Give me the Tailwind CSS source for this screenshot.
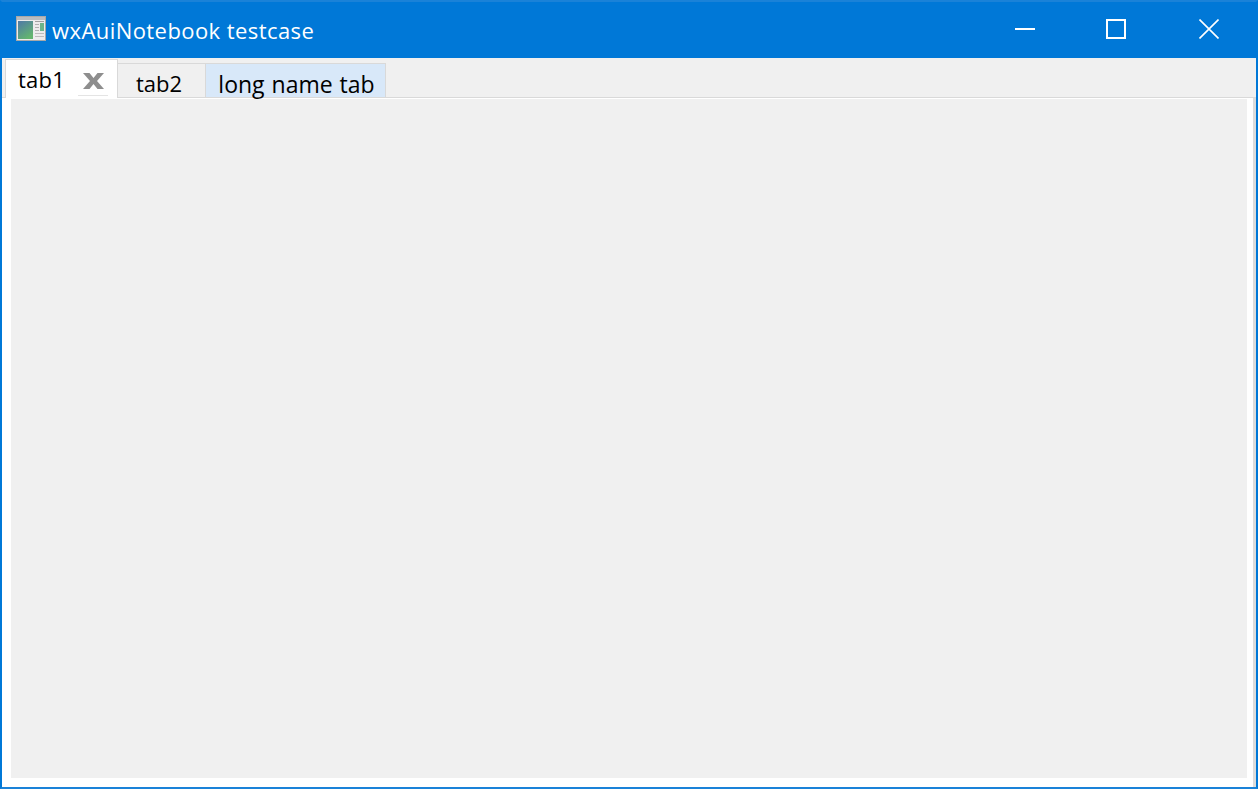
<!DOCTYPE html>
<html lang="en">
  <head>
    <meta charset="UTF-8" />
    <script src="https://cdn.jsdelivr.net/npm/@tailwindcss/browser@4"></script>
    <title>wxAuiNotebook testcase</title>
  </head>
  <body class="w-[1258px] h-[789px] overflow-hidden font-['Open_Sans',sans-serif]">
    <!-- window -->
    <div class="flex flex-col h-full border-x-2 border-b-2 border-t-2 border-x-[#0078d7] border-b-[#1a82d8] border-t-[#1a82d8] bg-[#f0f0f0]">
      <!-- title bar -->
      <header class="flex items-center h-14 shrink-0 bg-[#0078d7] text-white">
        <svg class="ml-[14px] mb-[3px] w-[30px] h-[25px]" viewBox="0 0 30 25">
          <rect x="0.5" y="0.5" width="29" height="24" fill="#ececec" stroke="#a8a8a8" />
          <rect x="1" y="1" width="28" height="3" fill="#b9bcc0" />
          <defs>
            <linearGradient id="pane" x1="0" y1="0" x2="0.6" y2="1">
              <stop offset="0" stop-color="#4f78a8" />
              <stop offset="1" stop-color="#63b56f" />
            </linearGradient>
          </defs>
          <rect x="2" y="5" width="15" height="18" fill="url(#pane)" />
          <rect x="19" y="5" width="9" height="1" fill="#a0a0a0" />
          <rect x="24" y="7" width="4" height="8" fill="#6db58a" />
          <rect x="19" y="8" width="4" height="1" fill="#b0b0b0" />
          <rect x="19" y="11" width="4" height="1" fill="#b0b0b0" />
          <rect x="19" y="14" width="4" height="1" fill="#b0b0b0" />
          <rect x="19" y="17" width="9" height="1" fill="#bcbcbc" />
          <rect x="19" y="20" width="9" height="1" fill="#bcbcbc" />
        </svg>
        <span class="ml-[6px] text-[22px] tracking-[0.43px] leading-none">wxAuiNotebook testcase</span>
        <div class="ml-auto mb-[2px] flex items-center">
          <svg class="w-5 h-5 mr-[71px]" viewBox="0 0 20 20"><path d="M0 9h20v2H0z" fill="#fff" /></svg>
          <svg class="w-5 h-5 mr-[73px]" viewBox="0 0 20 20"><path d="M1 1h18v18H1z" fill="none" stroke="#fff" stroke-width="2" /></svg>
          <svg class="w-5 h-5 mr-[37px]" viewBox="0 0 20 20"><path d="M0.5 0.5l19 19M19.500 0.500l-19 19" fill="none" stroke="#fff" stroke-width="1.6" /></svg>
        </div>
      </header>

      <!-- tab strip -->
      <nav class="relative flex items-end h-10 shrink-0 pl-[3px] border-b border-[#d9d9d9] text-[22px] leading-none text-black">
        <div class="relative z-10 flex items-center w-[113px] h-[39px] -mb-px pl-[12px] bg-white border border-b-0 border-[#d9d9d9] tracking-[0.2px]">
          <span>tab1</span>
          <svg class="absolute left-[76px] top-[12px] w-[23px] h-[18px]" viewBox="0 0 23 18">
            <path d="M1 1h6.500l4 5 4-5h6.500l-7 8 7 8h-6.500l-4-5-4 5h-6.500l7-8z" fill="#8e8e8e" />
          </svg>
          <span class="absolute left-[72px] bottom-[2px] w-[30px] h-px bg-[#e4e4e4]"></span>
        </div>
        <div class="flex items-center justify-center w-[87px] h-[34px] pr-[5px] border-t border-[#d9d9d9] pt-1">tab2</div>
        <div class="flex items-center justify-center w-[181px] h-[34px] bg-[#d8e8f9] border-t border-x border-[#d9d9d9] pt-[7px] pl-[2px] text-[23px] [word-spacing:1px]">long name tab</div>
      </nav>

      <!-- notebook page -->
      <main class="flex-1 bg-white pt-px pl-[9px] pr-[6px] pb-[9px] border-r-[3px] border-[#dcdcdc]">
        <div class="h-full bg-[#f0f0f0]"></div>
      </main>
    </div>
  </body>
</html>
